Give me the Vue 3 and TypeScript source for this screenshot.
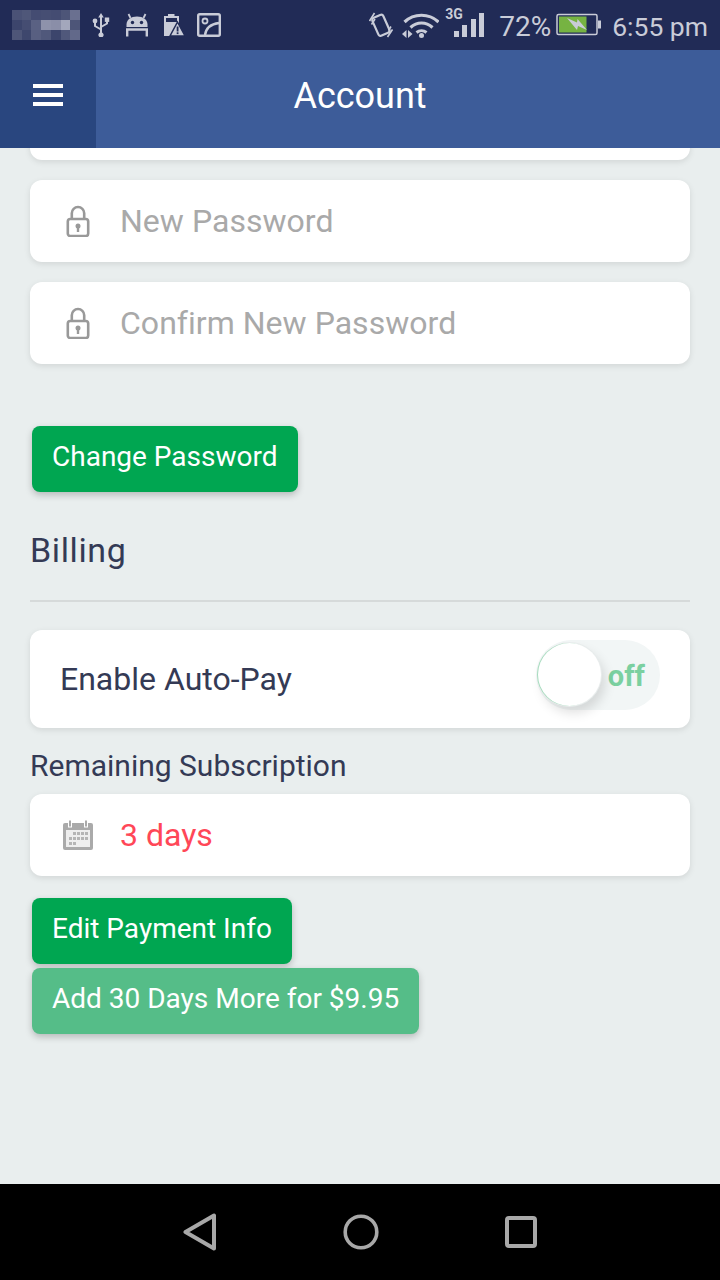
<script setup lang="ts">
const pixels: string[] = [
  '#4a5276', '#4f5779', '#444c72', '#464e73', '#444c72', '#4d5578', '#6a7090',
  '#3c456c', '#454d72', '#5a6183', '#8e92ab', '#8a8ea8', '#a3a7bc', '#4d5578',
  '#4e5678', '#3e476d', '#585f81', '#50587b', '#3c456c', '#50587b', '#62698a',
]
</script>

<template>
  <div class="phone">
    <div class="status-bar">
      <div class="status-left">
        <div class="pixels">
          <span v-for="(c, i) in pixels" :key="i" :style="{ background: c }"></span>
        </div>
        <svg class="usb" width="18" height="24" viewBox="0 0 18 24">
          <path d="M9 0 6.200 4.500h1.800v15a2.600 2.600 0 1 0 2 0V4.500h1.800z" fill="#c9ccd8" />
          <path d="M9 16.500 3 13V9.500" fill="none" stroke="#c9ccd8" stroke-width="2" />
          <circle cx="3" cy="8" r="2.400" fill="#c9ccd8" />
          <path d="M9 14 15 10.500V8" fill="none" stroke="#c9ccd8" stroke-width="2" />
          <rect x="12.800" y="4.500" width="4.400" height="4.400" fill="#c9ccd8" />
        </svg>
        <svg class="android" width="24" height="24" viewBox="0 0 24 24">
          <path d="M1.500 14V11.500C1.500 6.500 6 3.500 12 3.500S22.500 6.500 22.500 11.500V14Z" fill="#c9ccd8" />
          <path d="M5.500 5 3.500 1M18.500 5 20.500 1" stroke="#c9ccd8" stroke-width="1.800" />
          <circle cx="7.500" cy="9.500" r="1.700" fill="#212b56" />
          <circle cx="16.500" cy="9.500" r="1.700" fill="#212b56" />
          <path d="M2.200 23.500V16.500H21.800V23.500" fill="none" stroke="#c9ccd8" stroke-width="2.400" />
        </svg>
        <svg class="batt-alert" width="22" height="24" viewBox="0 0 22 24">
          <path d="M5 1h6.500v2h4.500V10L8.500 23H1V3h4z" fill="#c9ccd8" />
          <rect x="3" y="5" width="11" height="4" fill="#212b56" />
          <path d="M14.500 9 22 23H7z" fill="#c9ccd8" stroke="#212b56" stroke-width="1.500" />
          <rect x="13.700" y="13.500" width="1.800" height="5" fill="#212b56" />
          <rect x="13.700" y="19.300" width="1.800" height="1.800" fill="#212b56" />
        </svg>
        <svg class="picture" width="24" height="24" viewBox="0 0 24 24">
          <rect x="1.200" y="1.200" width="21.600" height="21.600" rx="1.500" fill="none" stroke="#c9ccd8" stroke-width="2.400" />
          <circle cx="8" cy="8" r="2.500" fill="none" stroke="#c9ccd8" stroke-width="1.800" />
          <path d="M8 22C9 15 14 11 22 10" fill="none" stroke="#c9ccd8" stroke-width="2.400" />
        </svg>
      </div>
      <div class="status-right">
        <svg class="vibrate" width="24" height="26" viewBox="0 0 24 26">
          <rect x="6" y="3.500" width="12" height="19.500" rx="2.500" transform="rotate(-24 12 13.500)" fill="none" stroke="#c9ccd8" stroke-width="2.200" />
          <path d="M0.500 9 5.500 1M2.500 12.500 6 7M23.500 17.500 18.500 25M22 14.500 19.500 18.500" stroke="#c9ccd8" stroke-width="1.600" />
        </svg>
        <svg class="wifi" width="37" height="26" viewBox="0 0 37 26">
          <path d="M2.500 10C12 1 27 1 36.500 10" fill="none" stroke="#c9ccd8" stroke-width="3.200" />
          <path d="M8.500 15.500C15 9.500 24 9.500 30.500 15.500" fill="none" stroke="#c9ccd8" stroke-width="3.200" />
          <path d="M14.500 20.500C17.500 18 21.500 18 24.500 20.500" fill="none" stroke="#c9ccd8" stroke-width="3" />
          <circle cx="19.500" cy="23.500" r="2.500" fill="#c9ccd8" />
          <path d="M0 22 4.500 18V26ZM10.500 22 6 18V26Z" fill="#c9ccd8" />
        </svg>
        <div class="signal">
          <span class="net">3G</span>
          <div class="bars">
            <i class="b1"></i><i class="b2"></i><i class="b3"></i><i class="b4"></i>
          </div>
        </div>
        <span class="pct">72%</span>
        <svg class="battery" width="46" height="24" viewBox="0 0 46 24">
          <rect x="1" y="1.500" width="40" height="20" rx="1.500" fill="#212b56" stroke="#c9ccd8" stroke-width="1.500" />
          <rect x="3" y="3.500" width="27.500" height="16" fill="#76b342" />
          <rect x="42" y="7.500" width="3" height="8" fill="#c9ccd8" />
          <path d="M11 5 21 9.500 21.500 6 31 17 22 13 21 17Z" fill="#c9ccd8" />
        </svg>
        <span class="time">6:55 pm</span>
      </div>
    </div>

    <header class="app-header">
      <button class="menu-btn" type="button" aria-label="Menu">
        <span></span><span></span><span></span>
      </button>
      <h1 class="title">Account</h1>
    </header>

    <main class="content">
      <div class="card field clipped"></div>

      <div class="card field">
        <svg class="field-icon" width="26" height="32" viewBox="0 0 26 32">
          <rect x="2.800" y="14" width="20.400" height="17" rx="2.500" fill="none" stroke="#999" stroke-width="2.600" />
          <path d="M6.800 14V8.200a6.200 6.200 0 0 1 12.400 0V14" fill="none" stroke="#999" stroke-width="2.600" />
          <circle cx="13" cy="21" r="2.500" fill="#999" />
          <rect x="11.800" y="22" width="2.400" height="5" fill="#999" />
        </svg>
        <span class="placeholder">New Password</span>
      </div>

      <div class="card field second">
        <svg class="field-icon" width="26" height="32" viewBox="0 0 26 32">
          <rect x="2.800" y="14" width="20.400" height="17" rx="2.500" fill="none" stroke="#999" stroke-width="2.600" />
          <path d="M6.800 14V8.200a6.200 6.200 0 0 1 12.400 0V14" fill="none" stroke="#999" stroke-width="2.600" />
          <circle cx="13" cy="21" r="2.500" fill="#999" />
          <rect x="11.800" y="22" width="2.400" height="5" fill="#999" />
        </svg>
        <span class="placeholder">Confirm New Password</span>
      </div>

      <button class="btn change" type="button">Change Password</button>

      <h2 class="section-title">Billing</h2>
      <hr class="divider" />

      <div class="card autopay">
        <span class="autopay-label">Enable Auto-Pay</span>
        <div class="toggle">
          <span class="knob"></span>
          <span class="toggle-text">off</span>
        </div>
      </div>

      <div class="sub-label">Remaining Subscription</div>

      <div class="card field">
        <svg class="field-icon cal" width="32" height="32" viewBox="0 0 32 32">
          <rect x="1" y="4" width="30" height="27" rx="2" fill="#aaa" />
          <rect x="4" y="11" width="24" height="17" fill="#eee" />
          <rect x="6.500" y="1" width="3" height="7" fill="#aaa" stroke="#fff" stroke-width="1" />
          <rect x="22.500" y="1" width="3" height="7" fill="#aaa" stroke="#fff" stroke-width="1" />
          <g fill="#b5b5b5">
            <rect x="11" y="13" width="3" height="3" /><rect x="15" y="13" width="3" height="3" /><rect x="19" y="13" width="3" height="3" /><rect x="23" y="13" width="3" height="3" />
            <rect x="7" y="18" width="3" height="3" /><rect x="11" y="18" width="3" height="3" /><rect x="15" y="18" width="3" height="3" /><rect x="19" y="18" width="3" height="3" /><rect x="23" y="18" width="3" height="3" />
            <rect x="7" y="23" width="3" height="3" /><rect x="11" y="23" width="3" height="3" />
          </g>
        </svg>
        <span class="days">3 days</span>
      </div>

      <button class="btn edit" type="button">Edit Payment Info</button>
      <button class="btn add" type="button">Add 30 Days More for $9.95</button>
    </main>

    <nav class="nav-bar">
      <svg width="34" height="38" viewBox="0 0 34 38">
        <path d="M2.500 19 31 2.500V35.500Z" fill="none" stroke="#a8a8a8" stroke-width="4" stroke-linejoin="round" />
      </svg>
      <svg width="36" height="36" viewBox="0 0 36 36">
        <circle cx="18" cy="18" r="15.800" fill="none" stroke="#a8a8a8" stroke-width="3.600" />
      </svg>
      <svg width="32" height="32" viewBox="0 0 32 32">
        <rect x="2" y="2" width="28" height="28" rx="2" fill="none" stroke="#a8a8a8" stroke-width="4" />
      </svg>
    </nav>
  </div>
</template>

<style>
html,
body {
  margin: 0;
  background: #e9eeee;
}
</style>

<style scoped>
.phone {
  width: 720px;
  height: 1280px;
  display: flex;
  flex-direction: column;
  overflow: hidden;
  font-family: Roboto, "Liberation Sans", sans-serif;
  background: #e9eeee;
}

.status-bar {
  flex: 0 0 50px;
  display: flex;
  justify-content: space-between;
  align-items: center;
  background: #212b56;
  color: #c9ccd8;
}

.status-left,
.status-right {
  display: flex;
  align-items: center;
}

.status-left {
  padding-left: 12px;
}

.pixels {
  display: grid;
  width: 68px;
  grid-template-columns: repeat(7, 1fr);
  grid-auto-rows: 10px;
}

.usb {
  margin-left: 12px;
}

.android {
  margin-left: 15px;
}

.batt-alert {
  margin-left: 14px;
}

.picture {
  margin-left: 12px;
}

.status-right {
  padding-right: 12px;
}

.wifi {
  margin-left: 9px;
}

.signal {
  position: relative;
  width: 39px;
  height: 36px;
  margin-left: 6px;
}

.net {
  position: absolute;
  left: 0;
  top: 0;
  font-size: 14px;
  font-weight: 700;
  line-height: 14px;
}

.bars {
  position: absolute;
  right: 0;
  bottom: 6px;
  display: flex;
  align-items: flex-end;
  gap: 3.500px;
}

.bars i {
  display: block;
  width: 5px;
  background: #c9ccd8;
}

.b1 {
  height: 6px;
}

.b2 {
  height: 12px;
}

.b3 {
  height: 18px;
}

.b4 {
  height: 24px;
}

.pct {
  margin-left: 15px;
  padding-top: 3px;
  font-size: 28px;
}

.battery {
  margin-left: 5px;
}

.time {
  margin-left: 10px;
  padding-top: 3px;
  font-size: 26.500px;
}

.app-header {
  flex: 0 0 98px;
  display: flex;
  align-items: center;
  position: relative;
  background: #3d5c99;
}

.menu-btn {
  width: 96px;
  height: 98px;
  display: flex;
  flex-direction: column;
  align-items: center;
  justify-content: center;
  gap: 5px;
  padding: 0 0 8px;
  border: 0;
  background: #29467f;
}

.menu-btn span {
  width: 30px;
  height: 4px;
  background: #fff;
}

.title {
  position: absolute;
  left: 0;
  right: 0;
  margin: 0;
  padding-bottom: 6px;
  text-align: center;
  color: #fff;
  font-size: 36px;
  font-weight: 400;
}

.content {
  flex: 1;
  min-height: 0;
  display: flex;
  flex-direction: column;
  align-items: flex-start;
  padding: 0 30px;
  color: #343a55;
}

.card {
  width: 660px;
  box-sizing: border-box;
  background: #fff;
  border-radius: 12px;
  box-shadow: 0 2px 6px rgba(0, 0, 0, 0.1);
}

.field {
  height: 82px;
  flex: none;
  display: flex;
  align-items: center;
  padding-left: 30px;
}

.clipped {
  margin-top: -70px;
  margin-bottom: 20px;
}

.second {
  margin-top: 20px;
}

.field-icon {
  width: 26px;
  flex: none;
  margin: 0 29px 0 5px;
}

.cal {
  width: 32px;
  margin: 0 26px 0 2px;
}

.placeholder {
  font-size: 32px;
  color: #a9a9a9;
  letter-spacing: 0.03px;
}

.days {
  font-size: 32px;
  color: #ff4757;
}

.btn {
  display: block;
  flex: none;
  height: 66px;
  margin-left: 2px;
  padding: 0 20px 6px;
  border: 0;
  border-radius: 8px;
  color: #fff;
  font-family: inherit;
  font-size: 28px;
  white-space: nowrap;
  box-shadow: 0 3px 7px rgba(0, 0, 0, 0.22);
}

.change {
  margin-top: 62px;
  background: #00a651;
}

.section-title {
  margin: 37px 0 0;
  font-size: 34px;
  line-height: 42px;
  font-weight: 400;
  letter-spacing: 0.6px;
}

.divider {
  width: 100%;
  box-sizing: border-box;
  margin: 29px 0 0;
  border: 0;
  border-top: 2px solid #d6dada;
}

.autopay {
  flex: none;
  height: 98px;
  margin-top: 28px;
  padding: 0 30px;
  display: flex;
  align-items: center;
  justify-content: space-between;
}

.autopay-label {
  font-size: 32px;
}

.toggle {
  position: relative;
  width: 124px;
  height: 70px;
  margin-bottom: 8px;
  box-sizing: border-box;
  border-radius: 35px;
  background: #f2f6f6;
  display: flex;
  align-items: center;
  justify-content: flex-end;
  padding: 2px 15px 0 0;
}

.knob {
  position: absolute;
  left: 2px;
  top: 3px;
  width: 63px;
  height: 63px;
  border-radius: 50%;
  background: #fff;
  box-shadow: -1px 0 0 #a5dcbd, 0 0 0 1px #e8ecec, 4px 7px 12px rgba(0, 0, 0, 0.13);
}

.toggle-text {
  font-size: 29px;
  font-weight: 700;
  color: #7bd0a0;
}

.sub-label {
  margin-top: 18px;
  height: 48px;
  line-height: 40px;
  font-size: 30px;
}

.edit {
  margin-top: 22px;
  background: #00a651;
}

.add {
  margin-top: 4px;
  background: #55bd88;
}

.nav-bar {
  flex: 0 0 96px;
  position: relative;
  display: flex;
  align-items: center;
  justify-content: center;
  gap: 126px;
  background: #000;
}
</style>
